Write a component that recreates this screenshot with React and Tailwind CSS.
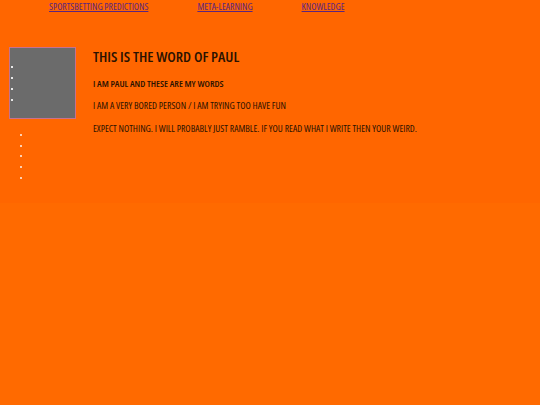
import React from "react";

const navLinks = ["SPORTSBETTING PREDICTIONS", "META-LEARNING", "KNOWLEDGE"];

function Dot({ className }) {
  return <span className={"block w-[2px] h-[2px] " + className} />;
}

export default function App() {
  return (
    <div
      className="min-h-screen bg-[#ff6a00] text-[#2b1200] font-stretch-semi-condensed"
      style={{ fontFamily: "'Open Sans', sans-serif" }}
    >
      <div className="h-[203px] bg-[#ff6600]">
        <nav className="flex gap-[49px] pl-[49px] pt-[1px] text-[9.6px] leading-[12px]">
          {navLinks.map((l) => (
            <a key={l} href="#" className="text-[#5b2580] underline">
              {l}
            </a>
          ))}
        </nav>

        <section className="flex items-start mt-[34px]">
          <aside className="ml-[9px] w-[67px] h-[72px] bg-[#6b6b6b] border border-[#c8708e] pt-[18px] pl-[1px]">
            <ul className="flex flex-col gap-[9px]">
              {[0, 1, 2, 3].map((i) => (
                <li key={i}>
                  <Dot className="bg-[#e8e8e8]" />
                </li>
              ))}
            </ul>
          </aside>
          <div className="ml-[17px]">
            <h1 className="text-[15px] leading-[18px] font-semibold">THIS IS THE WORD OF PAUL</h1>
            <p className="mt-[14px] text-[9.5px] leading-[10px] font-semibold">I AM PAUL AND THESE ARE MY WORDS</p>
            <p className="mt-[12px] text-[9.7px] leading-[10px]">I AM A VERY BORED PERSON / I AM TRYING TOO HAVE FUN</p>
            <p className="mt-[13px] text-[9.7px] leading-[10px]">
              EXPECT NOTHING. I WILL PROBABLY JUST RAMBLE. IF YOU READ WHAT I WRITE THEN YOUR WEIRD.
            </p>
          </div>
        </section>

        <ul className="flex flex-col gap-[8.7px] pl-[20px]">
          {[0, 1, 2, 3, 4].map((i) => (
            <li key={i}>
              <Dot className="bg-[#ffd0b0]" />
            </li>
          ))}
        </ul>
      </div>
    </div>
  );
}
